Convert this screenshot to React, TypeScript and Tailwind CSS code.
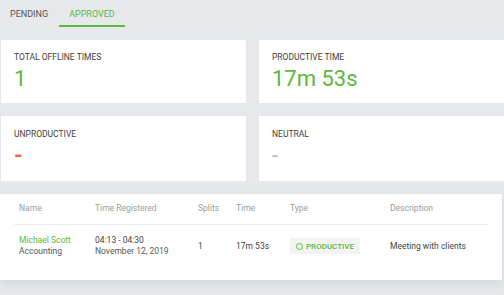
import React from 'react'

const GREEN = 'text-[#5bb93c]'

const StatCard = ({ label, value, valueClass, height, top }) => (
  <div className={`bg-white ${height} ${top} px-[13px]`}>
    <div className="text-[8.5px] leading-[10px] text-[#3d3d3d] uppercase">{label}</div>
    <div className={`mt-[6px] text-[22px] leading-[22px] ${valueClass}`}>{value}</div>
  </div>
)

const App = () => {
  const cols = 'grid grid-cols-[76px_103px_38px_54px_100px_1fr] pl-[5px]'

  return (
    <div className="w-[504px] h-[295px] bg-[#e6e8eb] overflow-hidden font-['Roboto',sans-serif]">
      {/* tabs */}
      <div className="flex flex-row">
        <div className="px-[10px] pt-[9px] pb-[7px] text-[9px] leading-[11px] text-[#555]">PENDING</div>
        <div className={`px-[10px] pt-[9px] pb-[5px] text-[9px] leading-[11px] ${GREEN} border-b-2 border-[#5bb93c] ml-[1px]`}>
          APPROVED
        </div>
      </div>

      <div className="pl-[1px] mt-[13px] grid grid-cols-2 gap-x-[13px] gap-y-[13px]">
        <StatCard label="Total Offline Times" value="1" valueClass={GREEN} height="h-[63px]" top="pt-[12px]" />
        <StatCard label="Productive Time" value="17m 53s" valueClass={GREEN} height="h-[63px]" top="pt-[12px]" />
        <StatCard label="Unproductive" value="-" valueClass="text-[#f4633f] font-bold" height="h-[65px]" top="pt-[13px]" />
        <StatCard label="Neutral" value="-" valueClass="text-[#b5b5b5]" height="h-[65px]" top="pt-[13px]" />
      </div>

      {/* table */}
      <div className="mt-[13px] mr-[2px] bg-white h-[86px] shadow-[0_4px_10px_rgba(0,0,0,0.08)] px-[14px] pt-[9px]">
        <div className="mr-[-1px] border-b border-[#eeeeee] pb-[11px]">
          <div className={`${cols} text-[8.5px] leading-[10px] text-[#9b9b9b]`}>
            <div>Name</div>
            <div>Time Registered</div>
            <div>Splits</div>
            <div>Time</div>
            <div>Type</div>
            <div>Description</div>
          </div>
        </div>
        <div className={`${cols} pt-[10px] items-center text-[8.5px] leading-[11px] text-[#555]`}>
          <div className="flex flex-col">
            <span className={GREEN}>Michael Scott</span>
            <span>Accounting</span>
          </div>
          <div className="flex flex-col">
            <span className="text-[#444]">04:13 - 04:30</span>
            <span>November 12, 2019</span>
          </div>
          <div className="text-[#444]">1</div>
          <div className="text-[#444]">17m 53s</div>
          <div>
            <span className="inline-flex items-center gap-[3px] h-[16px] pl-[6px] pr-[6px] bg-[#f2f3f2] text-[8px] font-medium text-[#5bb93c]">
              <span className="w-[7px] h-[7px] rounded-full border-[1.5px] border-[#5bb93c]" />
              PRODUCTIVE
            </span>
          </div>
          <div className="text-[#444]">Meeting with clients</div>
        </div>
      </div>
    </div>
  )
}

export default App
